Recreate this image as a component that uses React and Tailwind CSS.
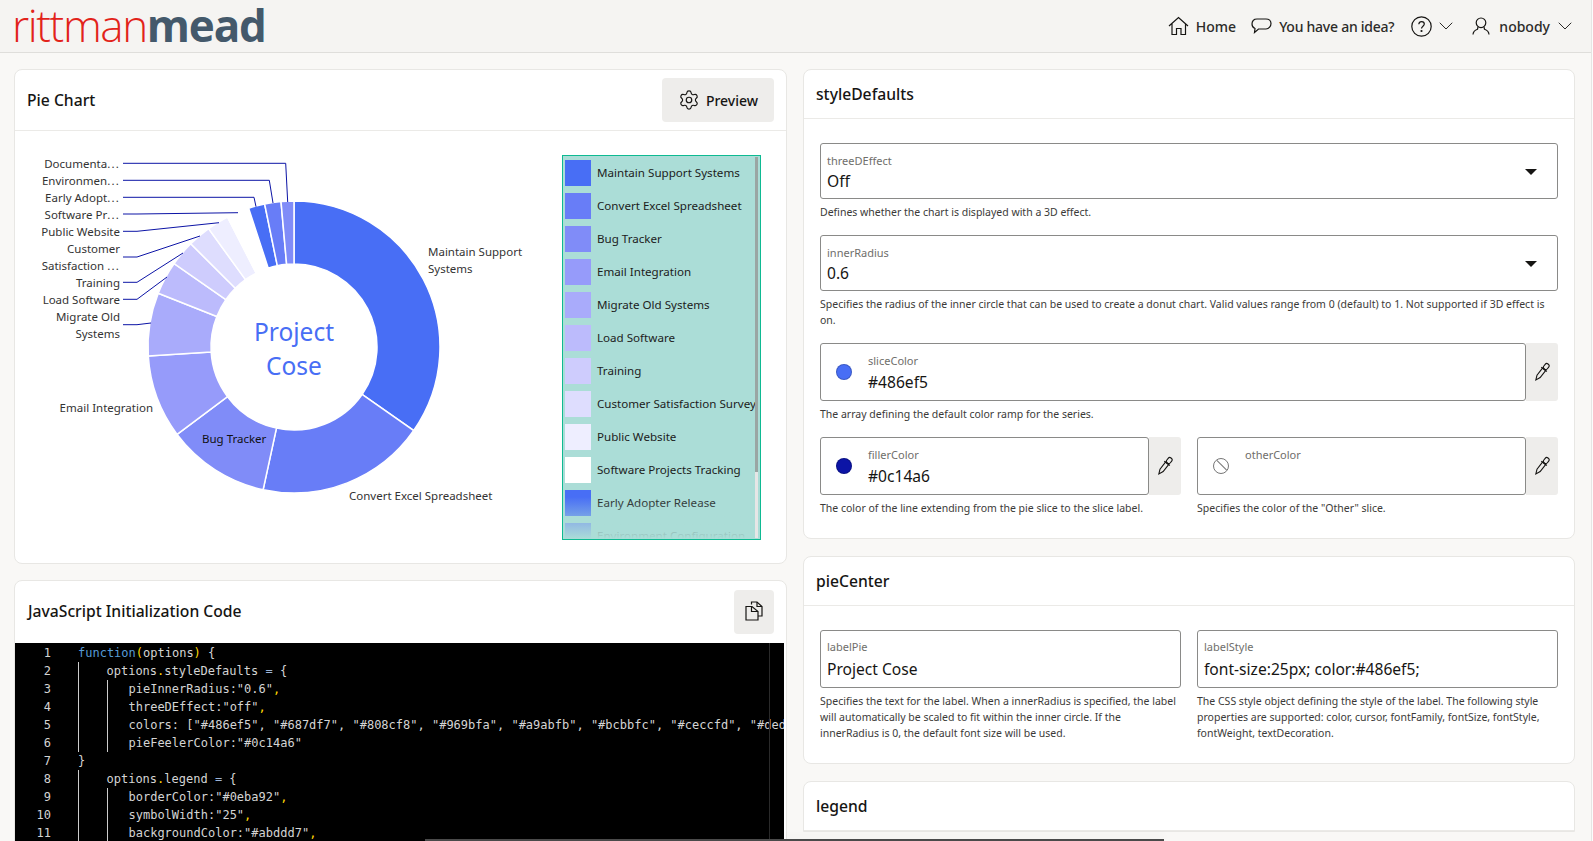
import { ChevronDown, Settings } from 'lucide-react'

const SLICES = [
    { end: 124.9, color: '#486ef5' },
    { end: 192.2, color: '#687df7' },
    { end: 233.2, color: '#808cf8' },
    { end: 266.5, color: '#969bfa' },
    { end: 291.6, color: '#a9abfb' },
    { end: 304.8, color: '#bcbbfc' },
    { end: 315, color: '#ceccfd' },
    { end: 324.2, color: '#deddfe' },
    { end: 332.9, color: '#eeeeff' },
    { end: 341.9, color: '#ffffff' },
    { end: 348.4, color: '#486ef5' },
    { end: 354.9, color: '#687df7' },
    { end: 360, color: '#808cf8' },
]

const LEGEND = [
    ['Maintain Support Systems', '#486ef5'],
    ['Convert Excel Spreadsheet', '#687df7'],
    ['Bug Tracker', '#808cf8'],
    ['Email Integration', '#969bfa'],
    ['Migrate Old Systems', '#a9abfb'],
    ['Load Software', '#bcbbfc'],
    ['Training', '#ceccfd'],
    ['Customer Satisfaction Survey', '#deddfe'],
    ['Public Website', '#eeeeff'],
    ['Software Projects Tracking', '#ffffff'],
    ['Early Adopter Release', '#486ef5'],
    ['Environment Configuration', '#687df7'],
]

// leader lines, in page coordinates (the svg viewBox starts at the card body)
const FEELERS = [
    '123,163.3 285.7,163.3 287.7,202',
    '123,180.3 269.3,180.3 273,203',
    '123,197.3 254,197.3 256,206.7',
    '123,214 137,214 238,212.7',
    '123,231.3 137,231.3 219,222.7',
    '123,257 137,257 200,236',
    '123,282.3 137,282.3 183,253',
    '123,299.3 137,299.3 167,277',
    '123,324.7 137,324.7 151,323',
]

const LABELS = [
    ['Documenta...', 120, 168],
    ['Environmen...', 120, 185],
    ['Early Adopt...', 120, 202],
    ['Software Pr...', 120, 219],
    ['Public Website', 120, 236],
    ['Customer', 120, 253],
    ['Satisfaction ...', 120, 270],
    ['Training', 120, 287],
    ['Load Software', 120, 304],
    ['Migrate Old', 120, 321],
    ['Systems', 120, 338],
    ['Email Integration', 153, 412],
]

const CX = 294
const CY = 347
const R = 146
const r = 83

function point(radius, deg) {
    const a = (deg * Math.PI) / 180
    return `${(CX + radius * Math.sin(a)).toFixed(2)} ${(CY - radius * Math.cos(a)).toFixed(2)}`
}

function slicePath(from, to) {
    const large = to - from > 180 ? 1 : 0
    return `M${point(r, from)} L${point(R, from)} A${R} ${R} 0 ${large} 1 ${point(R, to)} L${point(r, to)} A${r} ${r} 0 ${large} 0 ${point(r, from)} Z`
}

function PieChart() {
    let from = 0
    return (
        <svg width="786" height="432" viewBox="0 131 786 432" className="absolute left-[-15px] top-0" style={{ fontFamily: '"Noto Sans", sans-serif' }}>
            {SLICES.map((s) => {
                const d = slicePath(from, s.end)
                from = s.end
                return <path key={s.end} d={d} fill={s.color} stroke="#fff" strokeWidth="1.5" />
            })}
            {FEELERS.map((p) => (
                <polyline key={p} points={p} fill="none" stroke="#0c14a6" strokeWidth="1" />
            ))}
            {LABELS.map(([t, x, y]) => (
                <text key={t} x={x} y={y} textAnchor="end" fontSize="11.5" fill="#333">
                    {t.endsWith('...') ? <>{t.slice(0, -3)}<tspan letterSpacing="1.2">...</tspan></> : t}
                </text>
            ))}
            <text x="428" y="256" fontSize="11.5" fill="#333">Maintain Support</text>
            <text x="428" y="273" fontSize="11.5" fill="#333">Systems</text>
            <text x="349" y="500" fontSize="11.5" fill="#333">Convert Excel Spreadsheet</text>
            <text x="202" y="443" fontSize="11.5" fill="#111">Bug Tracker</text>
            <text x="294" y="341" textAnchor="middle" fontSize="24.5" fill="#486ef5">Project</text>
            <text x="294" y="375" textAnchor="middle" fontSize="24.5" fill="#486ef5">Cose</text>
        </svg>
    )
}

function Legend() {
    return (
        <div className="absolute left-[547px] top-[24px] w-[199px] h-[385px] border border-[#0eba92] bg-[#abddd7] overflow-hidden">
            <div className="flex flex-col gap-[7px] pl-[2px] pt-[4px] w-[192px] overflow-hidden">
                {LEGEND.map(([label, color]) => (
                    <div key={label} className="flex items-center gap-[6px] h-[26px] shrink-0">
                        <span className="w-[26px] h-[26px] shrink-0" style={{ backgroundColor: color }} />
                        <span className="text-[11.6px] text-[#1c1c1c] whitespace-nowrap">{label}</span>
                    </div>
                ))}
            </div>
            <div className="absolute left-0 right-0 bottom-0 h-[42px] bg-gradient-to-b from-[#abddd700] to-[#abddd7]" />
            <div className="absolute right-[2px] top-[1px] bottom-[1px] w-[3px] bg-[#e6e6e6]">
                <div className="h-[315px] bg-[#9aa5a3]" />
            </div>
        </div>
    )
}

function CopyIcon() {
    return (
        <svg className="-mt-[2px] -ml-[1px]" width="18" height="20" viewBox="0 0 18 20" fill="none" stroke="#161513" strokeWidth="1.2">
            <path d="M6.5 3.5V1H12l5 4.5v9.5h-4" />
            <path d="M12 1v4.5h5" />
            <path d="M1 5.5h6l6 5v8.5H1z" />
            <path d="M6.5 5.5v5h6.5" />
        </svg>
    )
}

function Pipette() {
    return (
        <svg width="20" height="20" viewBox="0 0 18 18" fill="none" stroke="#161513" strokeWidth="1">
            <g transform="rotate(38 9 9)">
                <rect x="7" y="0" width="4" height="5.5" rx="1.8" />
                <path d="M5.8 6h6.4" />
                <path d="M7.2 6v8L9 18l1.8-4V6z" />
            </g>
        </svg>
    )
}

function Card({ title, action, headerClass, children, className }) {
    return (
        <section className={`bg-white border border-[#e8e7e4] rounded-[8px] ${className ?? ''}`}>
            <div className={`flex items-center justify-between px-[12px] border-b border-[#ebeae7] ${headerClass}`}>
                <h2 className="pt-[2px] text-[15.7px] font-medium text-[#161513]">{title}</h2>
                {action}
            </div>
            {children}
        </section>
    )
}

function Select({ label, value }) {
    return (
        <div className="relative h-[56px] border border-[#8a8a88] rounded-[3px] px-[6px] pt-[9px] bg-white">
            <div className="text-[11px] leading-[16px] text-[#6f6e6b]">{label}</div>
            <div className="text-[15.6px] leading-[24px] text-[#161513]">{value}</div>
            <span className="absolute right-[20px] top-[25px] w-0 h-0 border-l-[6px] border-r-[6px] border-t-[6px] border-l-transparent border-r-transparent border-t-[#161513]" />
        </div>
    )
}

function TextField({ label, value }) {
    return (
        <div className="h-[58px] border border-[#8a8a88] rounded-[3px] px-[6px] pt-[8px] bg-white">
            <div className="text-[11px] leading-[16px] text-[#6f6e6b]">{label}</div>
            <div className="text-[15.6px] leading-[28px] text-[#161513]">{value}</div>
        </div>
    )
}

function ColorField({ label, value, color }) {
    return (
        <div className="flex h-[58px]">
            <div className="flex-1 flex items-center border border-[#8a8a88] rounded-[3px] bg-white">
                {color ? (
                    <span className="ml-[15px] w-[16px] h-[16px] rounded-full border border-[#00000033]" style={{ backgroundColor: color }} />
                ) : (
                    <span className="ml-[15px] w-[16px] h-[16px] rounded-full border border-[#777] relative overflow-hidden">
                        <span className="absolute left-[-1px] top-[6px] w-[18px] h-px bg-[#777] rotate-45" />
                    </span>
                )}
                <div className="ml-[16px] self-start pt-[9px]">
                    <div className="text-[11px] leading-[16px] text-[#6f6e6b]">{label}</div>
                    <div className="text-[15.6px] leading-[26px] text-[#161513]">{value}</div>
                </div>
            </div>
            <button className="w-[32px] flex items-center justify-center bg-[#eeedeb] rounded-r-[3px]">
                <Pipette />
            </button>
        </div>
    )
}

function Help({ children }) {
    return <p className="text-[10.5px] leading-[16px] text-[#3b3a38] mt-[5px]">{children}</p>
}

const P = ({ children }) => <span className="text-[#ffd700]">{children}</span>

const CODE = [
    [0, <><span className="text-[#569cd6]">function</span><P>(</P>options<P>)</P> {'{'}</>],
    [1, <>options<P>.</P>styleDefaults <span className="text-[#9cb4d8]">=</span> {'{'}</>],
    [2, <>pieInnerRadius:"0.6"<P>,</P></>],
    [2, <>threeDEffect:"off"<P>,</P></>],
    [2, <>colors: ["#486ef5", "#687df7", "#808cf8", "#969bfa", "#a9abfb", "#bcbbfc", "#ceccfd", "#ded</>],
    [2, <>pieFeelerColor:"#0c14a6"</>],
    [0, <>{'}'}</>],
    [1, <>options<P>.</P>legend <span className="text-[#9cb4d8]">=</span> {'{'}</>],
    [2, <>borderColor:"#0eba92"<P>,</P></>],
    [2, <>symbolWidth:"25"<P>,</P></>],
    [2, <>backgroundColor:"#abddd7"<P>,</P></>],
]

function CodeBlock() {
    return (
        <div className="relative flex-1 mr-[2px] bg-black overflow-hidden pt-px font-['DejaVu_Sans_Mono',monospace] text-[12px] leading-[18px] text-[#d4d4d4]">
            <div className="absolute left-[754px] top-0 bottom-0 w-px bg-[#2a2a2a]" />
            {CODE.map(([indent, code], i) => (
                <div key={i} className="flex h-[18px] whitespace-pre">
                    <span className="w-[36px] shrink-0 text-right text-[#d4d4d4]">{i + 1}</span>
                    <span className="w-[27px] shrink-0" />
                    {indent > 0 && <span className="w-[28.5px] shrink-0 border-l border-[#ccc]" />}
                    {indent > 1 && <span className="w-[22px] shrink-0 border-l border-[#ccc]" />}
                    <span>{code}</span>
                </div>
            ))}
        </div>
    )
}

export default function App() {
    return (
        <div className="relative w-[1593px] h-[841px] overflow-hidden bg-[#f9f8f6] font-['Noto_Sans',sans-serif] text-[#161513]">
            {/* Top bar */}
            <header className="flex items-center justify-between h-[53px] bg-[#f5f4f2] border-b border-[#dfdedb] pl-[12px] pr-[16px]">
                <div className="mb-[3px] text-[44px] font-['Open_Sans',sans-serif] whitespace-nowrap flex">
                    <span className="block leading-[50px] tracking-[-1.4px] font-light text-[#e2231a]">rittman</span>
                    <span className="block leading-[50px] tracking-[-1.2px] font-bold text-[#44596b]">mead</span>
                </div>
                <nav className="flex items-center text-[14px] font-medium text-[#2c2b29]">
                    <svg width="21" height="20" viewBox="0 0 21 20" fill="none" stroke="#161513" strokeWidth="1.2"><path d="M1 10L10.5 1.5 20 10M4 7.5V18.5h4.5v-6h4.5v6h4.5V7.5" /></svg>
                    <span className="ml-[7px]">Home</span>
                    <svg className="ml-[15px] mt-[2px]" width="21" height="18" viewBox="0 0 21 18" fill="none" stroke="#161513" strokeWidth="1.2"><path d="M6 1h9c3 0 5 2 5 4.5S18 11 15 11H7.5L3.5 14.5 4 10.5C2 9.8 1 8 1 6 1 3 3 1 6 1z" /></svg>
                    <span className="ml-[7px] tracking-[-0.25px]">You have an idea?</span>
                    <svg className="ml-[17px]" width="21" height="21" viewBox="0 0 21 21" fill="none" stroke="#161513" strokeWidth="1.2"><circle cx="10.5" cy="10.5" r="9.7" /><path d="M7.8 8.2c.2-1.7 1.4-2.5 2.8-2.5 1.5 0 2.7 1 2.7 2.4 0 2-2.8 2.2-2.8 4.4" /><circle cx="10.5" cy="15" r=".5" /></svg>
                    <ChevronDown className="ml-[2px]" size={24} strokeWidth={1} />
                    <svg className="ml-[14px]" width="18" height="18" viewBox="0 0 18 18" fill="none" stroke="#161513" strokeWidth="1.2"><circle cx="9" cy="5.8" r="4.8" /><path d="M6 10l-.5 2.2C3 13 1.2 14.6 1 17.5M12 10l.5 2.2c2.5.8 4.3 2.4 4.5 5.3" /></svg>
                    <span className="ml-[9px]">nobody</span>
                    <ChevronDown className="ml-[3px]" size={24} strokeWidth={1} />
                </nav>
            </header>

            <div className="grid grid-cols-[773px_772px] gap-x-[16px] pl-[14px] pt-[16px]">
                {/* Left column */}
                <div className="flex flex-col gap-[16px]">
                    <Card
                        title="Pie Chart"
                        headerClass="h-[61px]"
                        action={
                            <button className="flex items-center gap-[6px] h-[44px] w-[112px] justify-center bg-[#eeedeb] rounded-[4px] text-[14px] font-medium">
                                <Settings size={22} strokeWidth={1.3} />
                                Preview
                            </button>
                        }
                    >
                        <div className="relative h-[432px]">
                            <PieChart />
                            <Legend />
                        </div>
                    </Card>
                    <section className="flex flex-col h-[400px] bg-white border border-[#e8e7e4] rounded-t-[8px]">
                        <div className="flex items-center justify-between h-[62px] pl-[13px] pr-[12px]">
                            <h2 className="text-[15.7px] font-medium">JavaScript Initialization Code</h2>
                            <button className="w-[40px] h-[44px] flex items-center justify-center bg-[#eeedeb] rounded-[4px]">
                                <CopyIcon />
                            </button>
                        </div>
                        <CodeBlock />
                    </section>
                </div>

                {/* Right column */}
                <div className="flex flex-col gap-[17px]">
                    <Card title="styleDefaults" headerClass="h-[49px]">
                        <div className="px-[16px] pt-[24px] pb-[22px]">
                            <Select label="threeDEffect" value="Off" />
                            <Help>Defines whether the chart is displayed with a 3D effect.</Help>
                            <div className="mt-[15px]">
                                <Select label="innerRadius" value="0.6" />
                                <Help>Specifies the radius of the inner circle that can be used to create a donut chart. Valid values range from 0 (default) to 1. Not supported if 3D effect is on.</Help>
                            </div>
                            <div className="mt-[15px]">
                                <ColorField label="sliceColor" value="#486ef5" color="#486ef5" />
                                <Help>The array defining the default color ramp for the series.</Help>
                            </div>
                            <div className="grid grid-cols-2 gap-x-[16px] mt-[15px]">
                                <div>
                                    <ColorField label="fillerColor" value="#0c14a6" color="#0c14a6" />
                                    <Help>The color of the line extending from the pie slice to the slice label.</Help>
                                </div>
                                <div>
                                    <ColorField label="otherColor" value="" />
                                    <Help>Specifies the color of the "Other" slice.</Help>
                                </div>
                            </div>
                        </div>
                    </Card>
                    <Card title="pieCenter" headerClass="h-[49px]">
                        <div className="grid grid-cols-2 gap-x-[16px] px-[16px] pt-[24px] pb-[22px]">
                            <div>
                                <TextField label="labelPie" value="Project Cose" />
                                <Help>Specifies the text for the label. When a innerRadius is specified, the label will automatically be scaled to fit within the inner circle. If the innerRadius is 0, the default font size will be used.</Help>
                            </div>
                            <div>
                                <TextField label="labelStyle" value="font-size:25px; color:#486ef5;" />
                                <Help>The CSS style object defining the style of the label. The following style properties are supported: color, cursor, fontFamily, fontSize, fontStyle, fontWeight, textDecoration.</Help>
                            </div>
                        </div>
                    </Card>
                    <Card title="legend" headerClass="h-[49px]" className="rounded-b-none" />
                </div>
            </div>

            {/* sliver of the browser scrollbars */}
            <div className="absolute right-0 top-0 bottom-0 w-[2px] bg-[#fcfcfc] border-l border-[#e6e5e3]" />
            <div className="absolute left-[425px] bottom-0 w-[739px] h-[2px] bg-[#4a4a4a] shadow-[0_-3px_8px_rgba(0,0,0,0.08)]" />
        </div>
    )
}
